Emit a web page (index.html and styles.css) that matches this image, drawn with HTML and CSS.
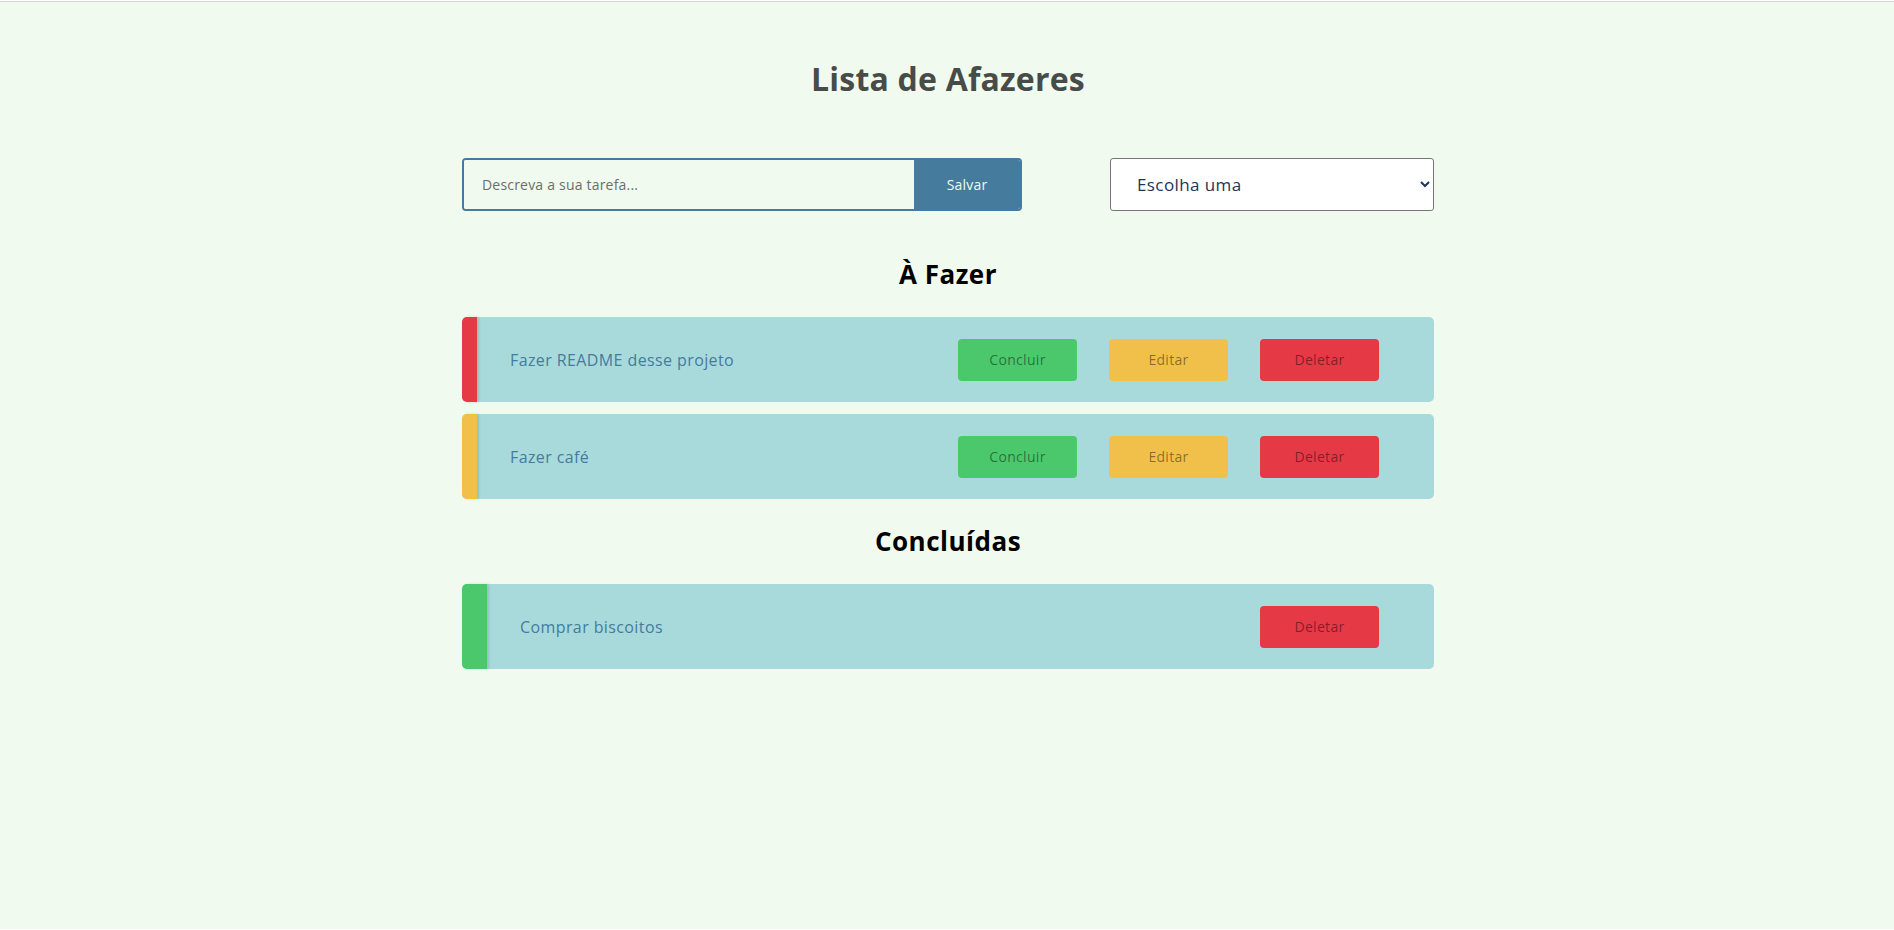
FILE: index.html
```html
<!DOCTYPE html>
<html lang="pt-BR">
<head>
<meta charset="utf-8">
<title>Lista de Afazeres</title>
<link rel="stylesheet" href="styles.css">
</head>
<body>
<div class="page">
  <h1 class="title">Lista de Afazeres</h1>
  <div class="controls">
    <form class="add-form">
      <input class="add-input" type="text" placeholder="Descreva a sua tarefa...">
      <button class="add-btn" type="button">Salvar</button>
    </form>
    <select class="filter">
      <option>Escolha uma</option>
      <option>Todas</option>
      <option>À Fazer</option>
      <option>Concluídas</option>
    </select>
  </div>

  <h2 class="section-title">À Fazer</h2>
  <ul class="list">
    <li class="task">
      <span class="bar bar-red"></span>
      <span class="task-text">Fazer README desse projeto</span>
      <div class="actions">
        <button class="btn btn-green">Concluir</button>
        <button class="btn btn-yellow">Editar</button>
        <button class="btn btn-red">Deletar</button>
      </div>
    </li>
    <li class="task">
      <span class="bar bar-yellow"></span>
      <span class="task-text">Fazer café</span>
      <div class="actions">
        <button class="btn btn-green">Concluir</button>
        <button class="btn btn-yellow">Editar</button>
        <button class="btn btn-red">Deletar</button>
      </div>
    </li>
  </ul>

  <h2 class="section-title section-done">Concluídas</h2>
  <ul class="list">
    <li class="task">
      <span class="bar bar-green bar-wide"></span>
      <span class="task-text">Comprar biscoitos</span>
      <div class="actions">
        <button class="btn btn-red">Deletar</button>
      </div>
    </li>
  </ul>
</div>
</body>
</html>
```

FILE: styles.css
```css
* {
  box-sizing: border-box;
}

html {
  background: #ffffff;
}

body {
  margin: 0;
  padding-top: 1px;
  background: #fff;
  font-family: "Open Sans", "Noto Sans", sans-serif;
}

.page {
  border-top: 1px solid #d4d6d4;
  background: #f1faee;
  min-height: 928px;
  padding: 57px 0 0 2px;
}

.title {
  margin: 0;
  text-align: center;
  font-size: 32px;
  line-height: 40px;
  font-weight: 700;
  color: #484c48;
  letter-spacing: 0.2px;
}

.controls {
  width: 972px;
  margin: 59px auto 0;
  display: flex;
  justify-content: space-between;
  align-items: center;
}

.add-form {
  width: 560px;
  height: 53px;
  display: flex;
  border: 2px solid #457b9d;
  border-radius: 4px;
  overflow: hidden;
  margin: 0;
}

.add-input {
  flex: 1;
  border: none;
  outline: none;
  background: #f1faee;
  padding: 0 18px;
  font-family: inherit;
  font-size: 14px;
  letter-spacing: 0.2px;
  color: #333;
}

.add-input::placeholder {
  color: #6b6f6b;
}

.add-btn {
  width: 106px;
  border: none;
  background: #457b9d;
  color: #f1faee;
  font-family: inherit;
  font-size: 14px;
  letter-spacing: 0.2px;
  cursor: pointer;
}

.filter {
  width: 324px;
  height: 53px;
  background: #ffffff;
  border: 1px solid #767676;
  border-radius: 3px;
  padding: 0 6px 0 22px;
  font-family: inherit;
  font-size: 17px;
  letter-spacing: 0.4px;
  color: #1d3557;
}

.section-title {
  margin: 47px 0 27px;
  text-align: center;
  font-size: 26px;
  line-height: 32px;
  font-weight: 700;
  letter-spacing: 0.5px;
  color: #000;
}

.section-done {
  margin-top: 26px;
}

.list {
  list-style: none;
  width: 972px;
  margin: 0 auto;
  padding: 0;
  display: flex;
  flex-direction: column;
  gap: 12px;
}

.task {
  height: 85px;
  display: flex;
  align-items: center;
  background: #a8dadc;
  border-radius: 5px;
}

.bar {
  align-self: stretch;
  width: 15px;
  border-radius: 5px 0 0 5px;
  box-shadow: 2px 0 3px rgba(0, 0, 0, 0.12);
}

.bar-wide {
  width: 25px;
}

.bar-red {
  background: #e63946;
}

.bar-yellow {
  background: #f0c04a;
}

.bar-green {
  background: #4bc76c;
}

.task-text {
  margin-left: 33px;
  font-size: 16px;
  letter-spacing: 0.4px;
  color: #457b9d;
}

.actions {
  margin-left: auto;
  margin-right: 55px;
  display: flex;
  gap: 32px;
}

.btn {
  width: 119px;
  height: 42px;
  border: none;
  border-radius: 4px;
  font-family: inherit;
  font-size: 14px;
  letter-spacing: 0.3px;
  color: rgba(0, 0, 0, 0.45);
  cursor: pointer;
}

.btn-green {
  background: #4bc76c;
}

.btn-yellow {
  background: #f0c04a;
}

.btn-red {
  background: #e63946;
}
```
